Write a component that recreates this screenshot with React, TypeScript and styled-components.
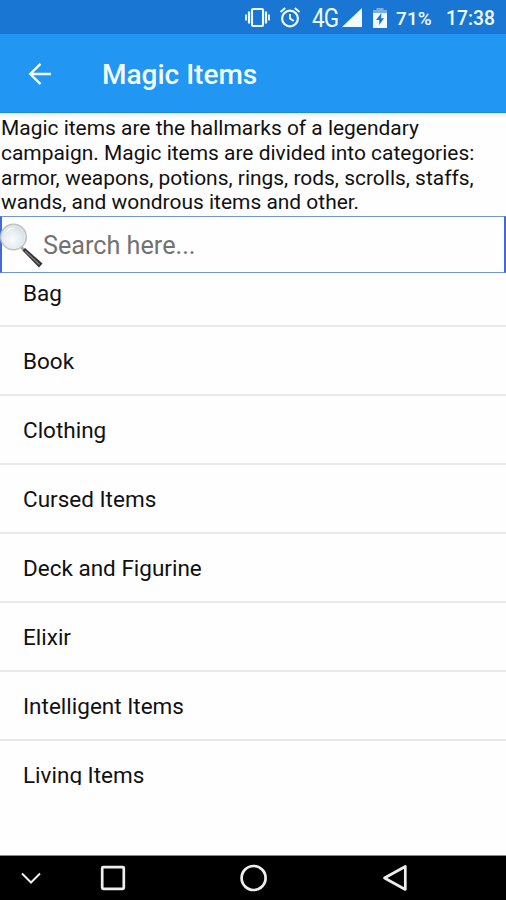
import React from "react";
import styled, { createGlobalStyle } from "styled-components";

const GlobalStyle = createGlobalStyle`
  * { box-sizing: border-box; }
  body { margin: 0; background: #fff; }
`;

const Screen = styled.div`
  width: 506px;
  height: 900px;
  display: flex;
  flex-direction: column;
  overflow: hidden;
  background: #fefefe;
  color: #111;
  font-family: Roboto, "Liberation Sans", sans-serif;
`;

const StatusBar = styled.div`
  flex: none;
  height: 34px;
  display: flex;
  align-items: center;
  padding-left: 244px;
  padding-top: 1px;
  background: #1976d2;
  color: #f0faff;
  white-space: nowrap;
`;

const StatusIcon = styled.svg<{ $gap?: number }>`
  display: block;
  flex: none;
  margin-right: ${(p) => p.$gap ?? 0}px;
`;

const StatusText = styled.span<{ $size: number; $width: number; $spacing?: number }>`
  flex: none;
  width: ${(p) => p.$width}px;
  margin-top: 2px;
  font-size: ${(p) => p.$size}px;
  font-weight: 500;
  letter-spacing: ${(p) => p.$spacing ?? 0}px;
  line-height: 24px;
`;

const NetworkType = styled(StatusText)`
  margin-top: 0;
  font-weight: 400;
  transform: scaleY(1.15);
`;

const AppBar = styled.header`
  flex: none;
  height: 79px;
  display: flex;
  align-items: center;
  gap: 50px;
  padding-left: 28px;
  background: #2196f3;
  border-bottom: 1px solid #1d8bdc;
  color: #f5fcff;
`;

const BackButton = styled.button`
  display: flex;
  width: 24px;
  height: 24px;
  padding: 0;
  border: 0;
  margin-top: 1px;
  background: none;
  color: inherit;
`;

const Title = styled.h1`
  margin: 3px 0 0;
  font-size: 28px;
  line-height: 34px;
  font-weight: 500;
`;

const Intro = styled.p`
  flex: none;
  height: 103px;
  margin: 0;
  padding: 3px 0 0 1px;
  background: linear-gradient(#e9e9ea, #fefefe 5px);
  font-size: 20.95px;
  line-height: 24.8px;
  white-space: nowrap;
`;

const SearchBox = styled.div`
  flex: none;
  height: 57px;
  display: flex;
  align-items: center;
  border: 1px solid #7397cc;
  border-left: 2px solid #4169d8;
  border-right: 2px solid #4169d8;
`;

const SearchIcon = styled.svg`
  flex: none;
  margin-left: -2px;
`;

const SearchInput = styled.input`
  flex: 1;
  min-width: 0;
  height: 100%;
  padding: 2px 0 0;
  border: 0;
  outline: 0;
  background: none;
  font-family: inherit;
  font-size: 25.2px;
  &::placeholder { color: #727272; opacity: 1; }
`;

const List = styled.ul`
  flex: none;
  height: 512px;
  margin: 0;
  padding: 0;
  overflow: hidden;
  list-style: none;
`;

const Item = styled.li`
  height: 69px;
  display: flex;
  align-items: center;
  padding: 0 23px;
  border-bottom: 2px solid #e9e9e9;
  font-size: 22.5px;
  line-height: 28px;
  &:first-child { margin-top: -15px; padding-top: 2px; }
  &:last-child { border-bottom-color: transparent; }
`;

const NavBar = styled.nav`
  flex: none;
  height: 45px;
  margin-top: auto;
  display: flex;
  align-items: center;
  padding-left: 20px;
  background: #000;
  border-top: 1px solid #888;
`;

const NavButton = styled.button<{ $gap?: number }>`
  flex: none;
  display: flex;
  padding: 0;
  border: 0;
  margin-right: ${(p) => p.$gap ?? 0}px;
  background: none;
  color: #eee;
`;

const items = ["Bag", "Book", "Clothing", "Cursed Items", "Deck and Figurine", "Elixir", "Intelligent Items", "Living Items"];

function Magnifier() {
  return (
    <SearchIcon width="43" height="49" viewBox="0 0 43 49">
      <defs>
        <radialGradient id="lens" cx="45%" cy="60%" r="65%">
          <stop offset="0" stopColor="#fafcfd" />
          <stop offset=".55" stopColor="#e6ebef" />
          <stop offset="1" stopColor="#cbd2d8" />
        </radialGradient>
      </defs>
      <path d="M20 26l6 6" stroke="#a2a7aa" strokeWidth="2.6" />
      <path d="M22.5 30.5l2.5-2.5L42.5 43.5l-3.5 4z" fill="#353535" />
      <path d="M25 31L39.5 44.5" stroke="#858585" strokeWidth="1.2" />
      <circle cx="13.5" cy="17" r="12.8" fill="url(#lens)" stroke="#bcc2c6" strokeWidth="1.4" />
      <circle cx="13.5" cy="17" r="11.3" fill="none" stroke="#e9eef1" strokeWidth="1" />
      <path d="M5 14q3-8 11-6q-8 1-11 6" fill="#fff" />
    </SearchIcon>
  );
}

export default function App() {
  return (
    <>
      <GlobalStyle />
      <Screen>
        <StatusBar>
          <StatusIcon width="27" height="22" viewBox="0 0 27 22" $gap={8} fill="none" stroke="currentColor">
            <rect x="8" y="2" width="11" height="17" rx="1" strokeWidth="2.1" />
            <path d="M5 4.5v12M22 4.5v12" strokeWidth="2.2" />
            <path d="M2 7.5v6M25 7.5v6" strokeWidth="1.8" />
          </StatusIcon>
          <StatusIcon width="22" height="22" viewBox="0 0 22 22" $gap={11} fill="none" stroke="currentColor">
            <circle cx="11" cy="11.5" r="7.9" strokeWidth="2.2" />
            <path d="M11 7V11.5l3.8 2.5M1.5 5l4.7-4M20.5 5l-4.7-4" strokeWidth="1.9" />
          </StatusIcon>
          <NetworkType $size={22.5} $width={30} $spacing={-0.8}>4G</NetworkType>
          <StatusIcon width="21" height="20" viewBox="0 0 21 20" $gap={10} fill="currentColor">
            <path d="M20 0v19H0z" />
          </StatusIcon>
          <StatusIcon width="14" height="22" viewBox="0 0 14 22" $gap={9}>
            <path d="M3.5 1h7v2H14v4H0V3h3.5z" fill="#78afe7" />
            <path d="M0 6h14v15H0z" fill="currentColor" />
            <path d="M8.5 6L3 13h3.2v5L11 11.2H8z" fill="#1976d2" />
          </StatusIcon>
          <StatusText $size={18.9} $width={50} $spacing={0.2}>71%</StatusText>
          <StatusText $size={19.3} $width={54}>17:38</StatusText>
        </StatusBar>
        <AppBar>
          <BackButton aria-label="Back">
            <svg width="24" height="24" viewBox="0 0 24 24" fill="none" stroke="currentColor" strokeWidth="2.4">
              <path d="M23 12H2M12.5 1.8L2.3 12l10.2 10.2" />
            </svg>
          </BackButton>
          <Title>Magic Items</Title>
        </AppBar>
        <Intro>
          Magic items are the hallmarks of a legendary<br />
          campaign. Magic items are divided into categories:<br />
          armor, weapons, potions, rings, rods, scrolls, staffs,<br />
          wands, and wondrous items and other.
        </Intro>
        <SearchBox>
          <Magnifier />
          <SearchInput placeholder="Search here..." />
        </SearchBox>
        <List>
          {items.map((item) => <Item key={item}>{item}</Item>)}
        </List>
        <NavBar>
          <NavButton aria-label="Hide navigation" $gap={58}>
            <svg width="22" height="26" viewBox="0 0 22 26" fill="none" stroke="currentColor" strokeWidth="2">
              <path d="M2 8.5l9 9 9-9" />
            </svg>
          </NavButton>
          <NavButton aria-label="Recent apps" $gap={114}>
            <svg width="26" height="26" viewBox="0 0 26 26" fill="none" stroke="currentColor" strokeWidth="2.7">
              <rect x="2.2" y="2.2" width="21.6" height="21.6" rx="1" />
            </svg>
          </NavButton>
          <NavButton aria-label="Home" $gap={114}>
            <svg width="28" height="28" viewBox="0 0 28 28" fill="none" stroke="currentColor" strokeWidth="2.7">
              <circle cx="13.6" cy="14" r="12" />
            </svg>
          </NavButton>
          <NavButton aria-label="Back">
            <svg width="26" height="28" viewBox="0 0 26 28" fill="none" stroke="currentColor" strokeWidth="2.7" strokeLinejoin="round">
              <path d="M23.3 2.5v23L2.5 14z" />
            </svg>
          </NavButton>
        </NavBar>
      </Screen>
    </>
  );
}
